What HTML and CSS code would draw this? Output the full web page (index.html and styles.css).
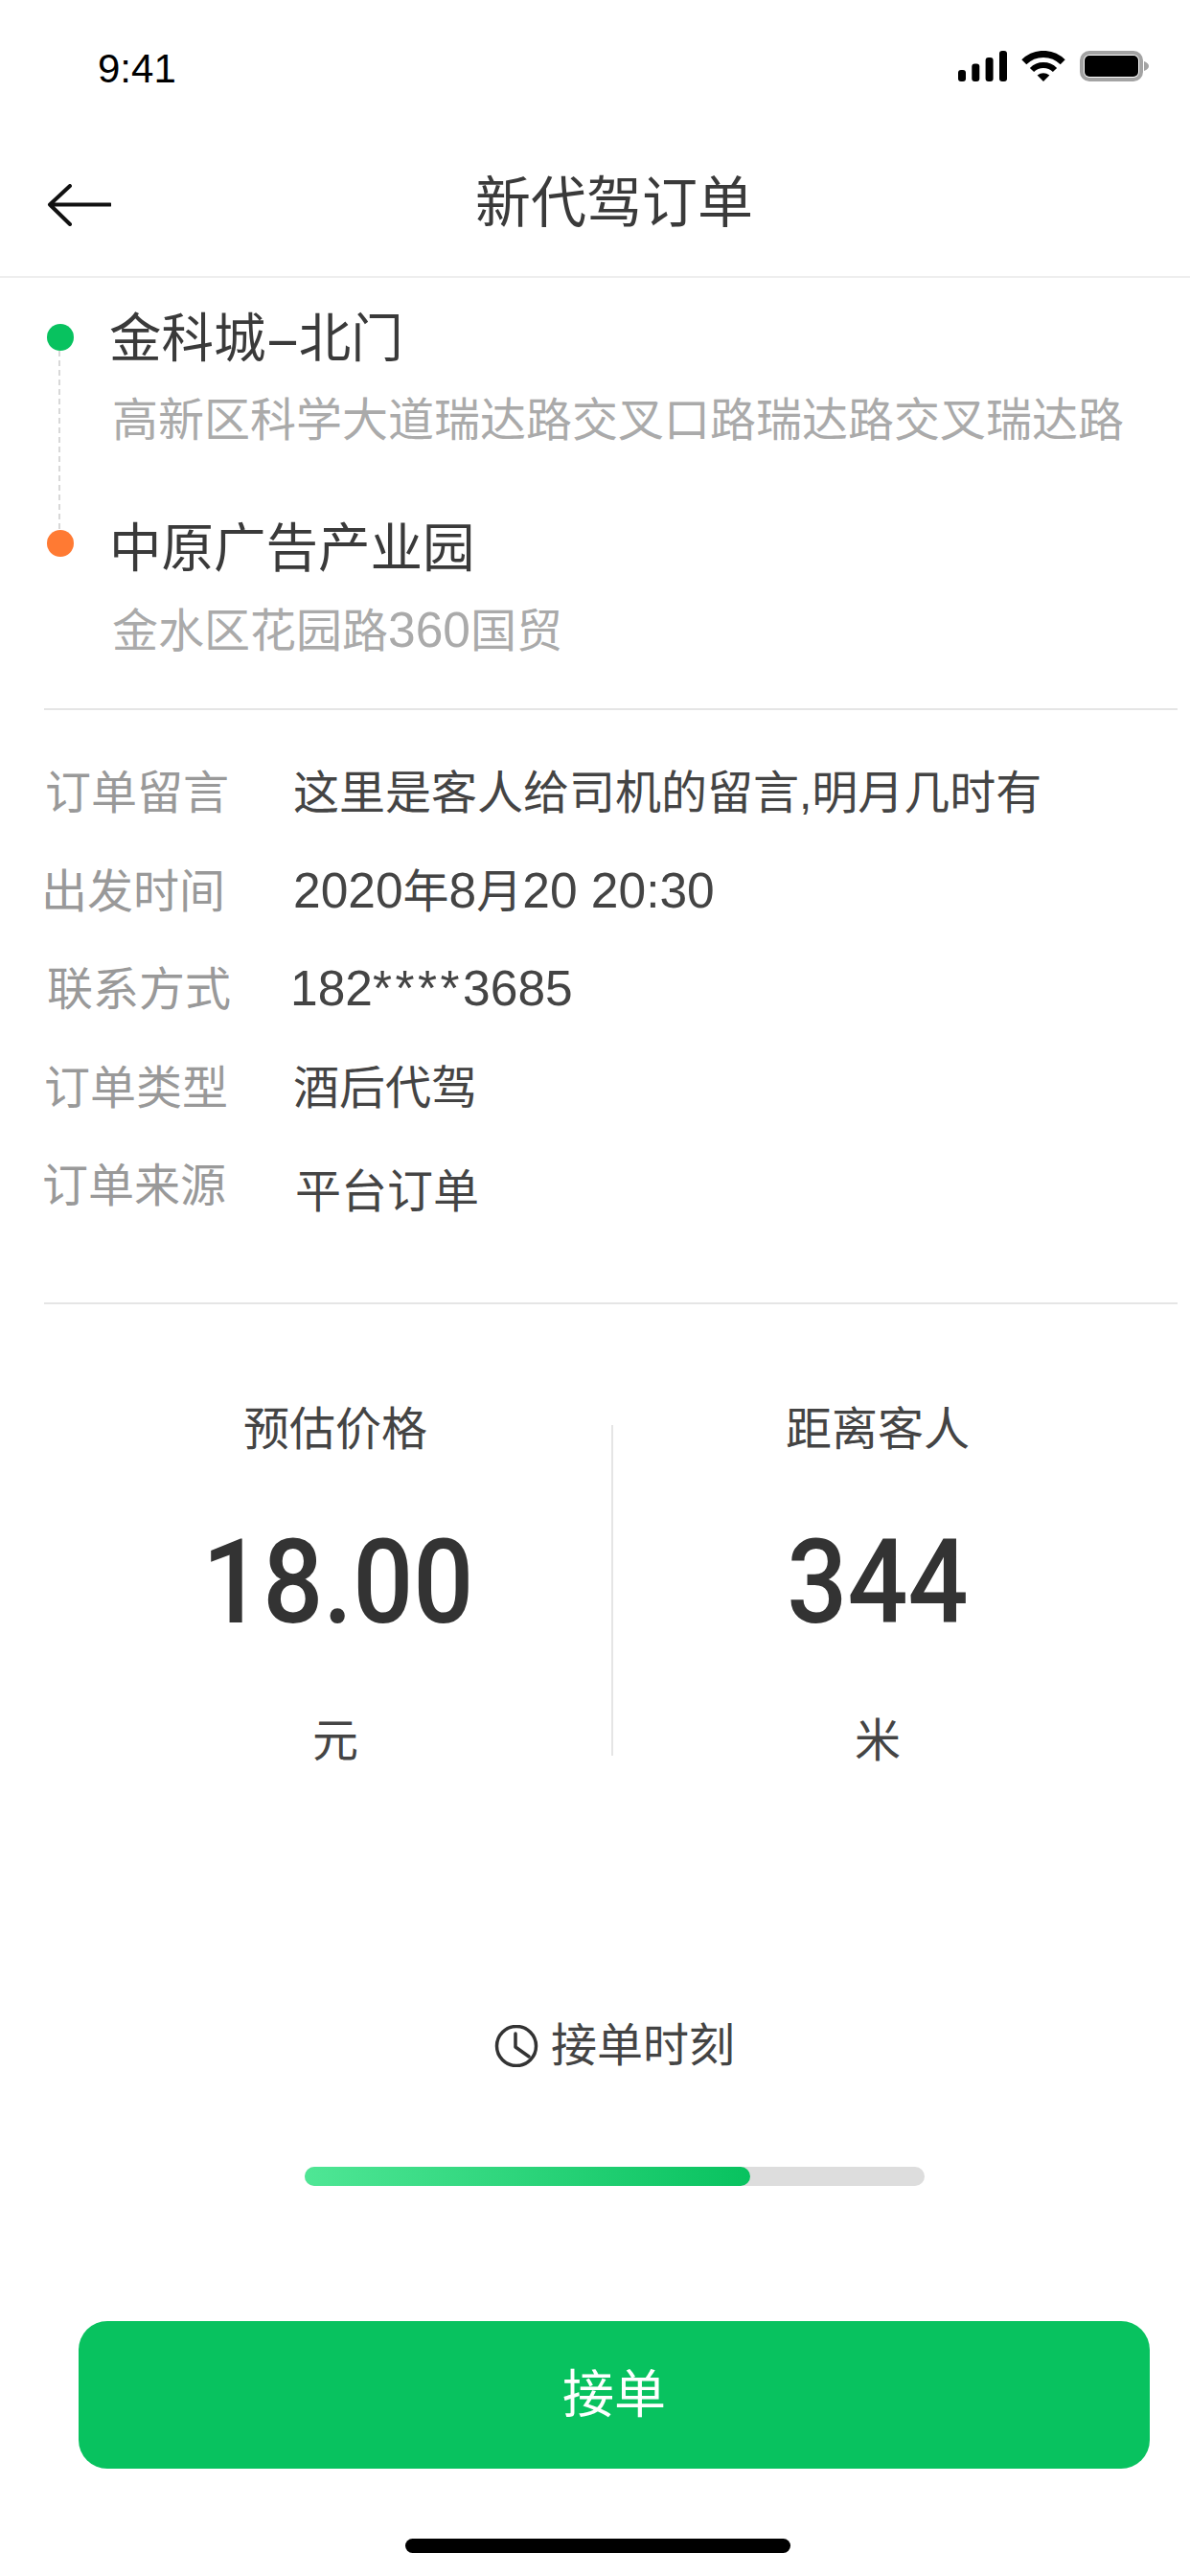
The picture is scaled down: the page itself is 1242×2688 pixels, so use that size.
FILE: index.html
```html
<!DOCTYPE html>
<html lang="zh">
<head>
<meta charset="utf-8">
<title>新代驾订单</title>
<link rel="stylesheet" href="styles.css">
</head>
<body>
<div class="page">
  <header class="status">
    <span class="time">9:41</span>
    <svg class="status-icons" viewBox="0 0 200 32" width="200" height="32" aria-hidden="true">
      <rect x="0" y="20" width="8" height="12" rx="3"/>
      <rect x="14.3" y="13.5" width="8" height="18.5" rx="3"/>
      <rect x="28.6" y="7" width="8" height="25" rx="3"/>
      <rect x="43" y="0" width="8" height="32" rx="3"/>
      <path d="M68.8 11.8A28.5 28.5 0 0 1 109.2 11.8" fill="none" stroke="#000" stroke-width="7"/>
      <path d="M77 20A17 17 0 0 1 101 20" fill="none" stroke="#000" stroke-width="6"/>
      <path d="M89 32L82.6 25.6Q89 21 95.4 25.6Z"/>
      <rect x="129" y="2" width="62" height="28" rx="8" fill="none" stroke="#a3a3a3" stroke-width="4"/>
      <rect x="132" y="5" width="56" height="22" rx="5"/>
      <path d="M194 11Q199 13 199 16Q199 19 194 21Z" fill="#a3a3a3"/>
    </svg>
  </header>

  <nav class="nav">
    <svg class="back" viewBox="0 0 67 44" width="67" height="44" aria-hidden="true">
      <path d="M66 21.500H4M24 2L3 21.500L24 42" fill="none" stroke="#111" stroke-width="4" stroke-linecap="round" stroke-linejoin="round"/>
    </svg>
    <h1 class="nav-title">新代驾订单</h1>
  </nav>

  <section class="route">
    <div class="stop stop-start">
      <span class="dot dot-green"></span>
      <div class="stop-name">金科城<span class="hyphen">-</span>北门</div>
      <div class="stop-addr">高新区科学大道瑞达路交叉口路瑞达路交叉瑞达路</div>
    </div>
    <div class="stop stop-end">
      <span class="dot dot-orange"></span>
      <div class="stop-name">中原广告产业园</div>
      <div class="stop-addr">金水区花园路<span class="num">360</span>国贸</div>
    </div>
  </section>

  <hr class="rule rule-route">

  <section class="info">
    <div class="row row-a"><span class="label">订单留言</span><span class="value">这里是客人给司机的留言,明月几时有</span></div>
    <div class="row row-b"><span class="label">出发时间</span><span class="value"><span class="num">2020</span>年<span class="num">8</span>月<span class="num">20 20:30</span></span></div>
    <div class="row row-c"><span class="label">联系方式</span><span class="value"><span class="num">182<span class="stars">****</span>3685</span></span></div>
    <div class="row row-d"><span class="label">订单类型</span><span class="value">酒后代驾</span></div>
    <div class="row row-e"><span class="label">订单来源</span><span class="value">平台订单</span></div>
  </section>

  <hr class="rule rule-info">

  <section class="stats">
    <div class="stat stat-price">
      <div class="stat-label">预估价格</div>
      <div class="stat-num">18.00</div>
      <div class="stat-unit">元</div>
    </div>
    <div class="stat-sep"></div>
    <div class="stat stat-dist">
      <div class="stat-label">距离客人</div>
      <div class="stat-num">344</div>
      <div class="stat-unit">米</div>
    </div>
  </section>

  <div class="timer">
    <svg class="clock" viewBox="0 0 46 44" width="46" height="44" aria-hidden="true">
      <circle cx="23" cy="22" r="20.500" fill="none" stroke="#333" stroke-width="3.500"/>
      <path d="M22 9V23L36 33" fill="none" stroke="#333" stroke-width="3.500" stroke-linecap="round" stroke-linejoin="round"/>
    </svg>
    <span class="timer-text">接单时刻</span>
  </div>

  <div class="progress"><div class="progress-fill"></div></div>

  <button class="accept" type="button">接单</button>

  <div class="home-bar"></div>
</div>
</body>
</html>
```
FILE: styles.css
```css
* { box-sizing: border-box; }
html, body { margin: 0; padding: 0; background: #fff; }
body { font-family: "Liberation Sans", "Noto Sans CJK SC", sans-serif; color: #333; }
.page { width: 1242px; height: 2688px; overflow: hidden; display: flex; flex-direction: column; }
.num { font-size: 51.5px; line-height: 1; }
.stars { letter-spacing: 3.500px; }

/* status bar */
.status { height: 100px; padding: 53px 42px 0 102px; display: flex; justify-content: space-between; align-items: flex-start; }
.time { font-size: 42px; line-height: 38px; color: #000; }
.status-icons { display: block; }

/* nav */
.nav { height: 190px; padding: 38px 0 0 49px; border-bottom: 2px solid #eee; display: flex; align-items: center; }
.back { display: block; flex: none; margin-top: 2px; }
.nav-title { margin: -3px 0 0 380px; font-size: 58px; line-height: 70px; font-weight: 400; color: #3a3a3a; }

/* route */
.route { padding: 34px 0 0 114px; }
.stop { position: relative; }
.stop-end { margin-top: 74px; }
.stop-name { font-size: 54.5px; line-height: 60px; color: #3a3a3a; }
.hyphen { display: inline-block; margin: 0 8px; transform: scaleX(2.1); }
.stop-addr { font-size: 48px; line-height: 60px; color: #aaa; margin-top: 25px; padding-left: 3px; white-space: nowrap; }
.stop-end .stop-addr { margin-top: 26px; }
.dot { position: absolute; left: -65px; width: 28px; height: 28px; border-radius: 50%; }
.dot-green { top: 14px; background: #08c25f; }
.dot-orange { top: 10px; background: #ff7a33; }
.stop-start::after { content: ""; position: absolute; left: -53px; top: 42px; height: 186px; border-left: 2px dashed #d8d8d8; }

/* rules */
.rule { border: 0; height: 2px; margin: 0 0 0 46px; width: 1183px; background: #e5e5e5; flex: none; }
.rule-route { margin-top: 50px; }
.rule-info { margin-top: 91px; }

/* info rows */
.info { padding-top: 57px; display: flex; flex-direction: column; gap: 42.5px; }
.row { display: flex; align-items: flex-start; font-size: 48px; line-height: 60px; }
.label { width: 306px; color: #999; flex: none; }
.value { color: #444; }
.row-a .label { padding-left: 47px; }
.row-b .label { padding-left: 43px; }
.row-c .label { padding-left: 49px; }
.row-d .label { padding-left: 46px; }
.row-e .label { padding-left: 44px; }
.row-c .value { margin-left: -3px; }
.row-e .value { margin-left: 2px; margin-top: 6px; }
.row-e { height: 60px; }

/* stats */
.stats { margin-top: 101px; padding-left: 62px; display: flex; align-items: flex-start; }
.stat { text-align: center; }
.stat-price { width: 576px; }
.stat-dist { width: 552px; }
.stat-sep { width: 2px; height: 345px; margin-top: 25px; background: #e5e5e5; flex: none; }
.stat-label { font-size: 48px; line-height: 60px; color: #444; }
.stat-num { margin-top: 65px; font-family: Roboto, "Liberation Sans", sans-serif; font-size: 122px; line-height: 130px; font-weight: 500; color: #333; transform: scaleX(0.91); }
.stat-price .stat-num { padding-left: 6px; }
.stat-unit { margin-top: 70px; font-size: 48px; line-height: 60px; color: #444; }

/* timer */
.timer { margin-top: 258px; padding-left: 41px; height: 60px; display: flex; justify-content: center; align-items: center; gap: 13px; }
.clock { display: block; flex: none; }
.timer-text { font-size: 48px; line-height: 60px; color: #444; }

/* progress */
.progress { margin: 96px 0 0 318px; width: 647px; height: 20px; border-radius: 10px; background: #ddd; flex: none; }
.progress-fill { width: 465px; height: 20px; border-radius: 10px; background: linear-gradient(90deg, #4fe695, #08c25f); }

/* action */
.accept { margin: 141px 0 0 82px; width: 1118px; height: 154px; border: 0; border-radius: 30px; background: #08c25f; color: #fff; font-family: inherit; font-size: 54px; line-height: 60px; padding: 0; flex: none; }

.home-bar { margin: 73px 0 0 423px; width: 402px; height: 15px; border-radius: 8px; background: #000; flex: none; }
```
